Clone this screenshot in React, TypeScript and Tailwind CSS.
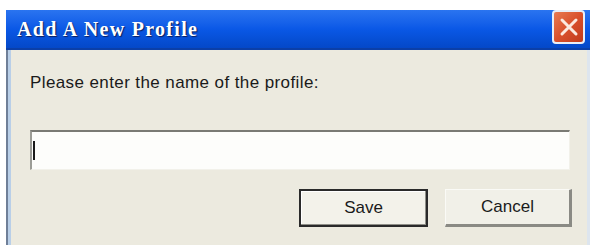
import React from "react";

export default function App() {
  return (
    <div className="w-[590px] h-[245px] bg-white overflow-hidden relative" style={{ fontFamily: '"Liberation Sans", Arial, sans-serif' }}>
      <div className="absolute left-[6px] top-[10px] w-[584px] h-[240px] flex flex-col">
        {/* Title bar */}
        <div className="h-[40px] flex items-center justify-between pl-[11px] pr-[5px] bg-gradient-to-b from-[#2a74f0] via-[#0a58e6] to-[#0448c8] border-b-[2px] border-[#0b3fa8]">
          <span
            className="text-white text-[20px] font-bold tracking-[1.3px]"
            style={{ fontFamily: '"Liberation Serif", "Times New Roman", serif', textShadow: "1px 1px 1px #0a1f60" }}
          >
            Add A New Profile
          </span>
          <div className="w-[33px] h-[34px] mt-[-4px] rounded-[4px] border-[2px] border-[#e8eef8] bg-gradient-to-br from-[#e87a52] via-[#d9502c] to-[#c03a1c] flex items-center justify-center">
            <svg width="20" height="20" viewBox="0 0 20 20">
              <path d="M3 3 L17 17 M17 3 L3 17" stroke="#fbe9df" strokeWidth="3" strokeLinecap="round" />
            </svg>
          </div>
        </div>
        {/* Body */}
        <div className="flex-1 flex bg-[#eceadf]">
          <div className="w-[2px] bg-[#6f7f98]" />
          <div className="w-[3px] bg-[#b9cfe8]" />
          <div className="flex-1 flex flex-col pl-[19px] pr-[17px]">
            <div className="mt-[24px] text-[17px] tracking-[0.4px] text-[#1a1a1a] leading-[18px]">Please enter the name of the profile:</div>
            <div className="mt-[38px] h-[40px] bg-[#fdfdfb] border-t-[2px] border-l-[2px] border-t-[#7a7a74] border-l-[#9c9c96] border-b border-r border-[#f2f1ea] flex items-center pl-[1px]">
              <div className="w-[2px] h-[19px] bg-[#1a1a1a]" />
            </div>
            <div className="mt-[19px] flex justify-end gap-[17px]">
              <button className="w-[129px] h-[38px] border-[2px] border-[#2a2a2a] bg-[#f3f2ea] text-[17px] text-[#1a1a1a] flex items-center justify-center shadow-[inset_-1px_-1px_0_#8f8f88,inset_1px_1px_0_#ffffff]">
                Save
              </button>
              <button className="w-[127px] h-[38px] border-t border-l border-[#fafaf6] border-b-[3px] border-r-[3px] border-b-[#8a8a84] border-r-[#8a8a84] bg-[#f1f0e8] text-[17px] text-[#1a1a1a] flex items-center justify-center mr-[-2px]">
                Cancel
              </button>
            </div>
          </div>
          <div className="w-[3px] bg-[#dde5ee]" />
        </div>
      </div>
    </div>
  );
}
